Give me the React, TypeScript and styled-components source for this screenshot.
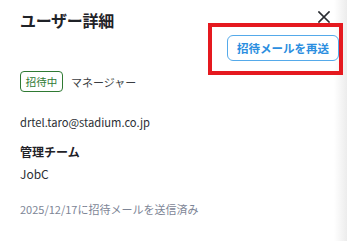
import React from 'react'
import styled, { createGlobalStyle } from 'styled-components'

const GlobalStyle = createGlobalStyle`
  html, body {
    margin: 0;
    padding: 0;
    background: #ffffff;
  }
  body {
    font-family: 'Noto Sans CJK JP', 'Noto Sans', sans-serif;
    color: #25282d;
  }
`

const Drawer = styled.div`
  position: relative;
  width: 347px;
  height: 241px;
  box-sizing: border-box;
  padding: 8px 8px 0 20px;
  background: linear-gradient(to right, #ffffff 0, #ffffff 334px, #ececec 347px);
  overflow: hidden;
`

const HeaderRow = styled.div`
  display: flex;
  justify-content: space-between;
  align-items: flex-start;
  height: 27px;
`

const Title = styled.h2`
  margin: 0;
  font-size: 16px;
  line-height: 25px;
  font-weight: 700;
  color: #1f2227;
  letter-spacing: -0.3px;
`

const CloseButton = styled.button`
  display: flex;
  align-items: center;
  justify-content: center;
  width: 16px;
  height: 16px;
  margin: 1px 7px 0 0;
  padding: 0;
  border: none;
  background: none;
  cursor: pointer;
`

const ActionRow = styled.div`
  display: flex;
  justify-content: flex-end;
`

const ResendButton = styled.button`
  height: 26px;
  width: 112px;
  padding: 0;
  border: 1px solid #55aaea;
  border-radius: 6px;
  background: #ffffff;
  color: #2b8ee0;
  font-family: 'Noto Sans CJK JP', sans-serif;
  font-size: 11.5px;
  font-weight: 700;
  cursor: pointer;
`

const Highlight = styled.div`
  position: absolute;
  left: 208px;
  top: 23px;
  width: 135px;
  height: 52px;
  box-sizing: border-box;
  border: 4px solid #e5191f;
  pointer-events: none;
`

const RoleRow = styled.div`
  display: flex;
  align-items: center;
  gap: 8px;
  margin-top: 10px;
`

const StatusBadge = styled.span`
  display: inline-flex;
  align-items: center;
  justify-content: center;
  box-sizing: border-box;
  width: 43px;
  height: 21px;
  border: 1px solid #2f7a33;
  border-radius: 4px;
  color: #2f7a33;
  font-size: 10.5px;
`

const RoleText = styled.span`
  font-size: 11px;
  color: #3a3d42;
`

const Email = styled.div`
  margin-top: 21px;
  font-size: 11.2px;
  line-height: 18px;
  color: #2c2f34;
`

const Field = styled.div`
  margin-top: 12px;
  display: flex;
  flex-direction: column;
  gap: 4px;
`

const FieldLabel = styled.div`
  font-size: 12px;
  line-height: 18px;
  font-weight: 700;
  color: #1f2227;
`

const FieldValue = styled.div`
  font-size: 12px;
  line-height: 18px;
  color: #2c2f34;
`

const SentNote = styled.div`
  margin-top: 17px;
  font-size: 11px;
  line-height: 18px;
  color: #7d8596;
`

export default function App() {
  return (
    <>
      <GlobalStyle />
      <Drawer>
        <HeaderRow>
          <Title>ユーザー詳細</Title>
          <CloseButton aria-label="閉じる">
            <svg width="12" height="12" viewBox="0 0 12 12">
              <path d="M1 1 L11 11 M11 1 L1 11" stroke="#2a2d32" strokeWidth="1.7" strokeLinecap="square" />
            </svg>
          </CloseButton>
        </HeaderRow>
        <ActionRow>
          <ResendButton>招待メールを再送</ResendButton>
        </ActionRow>
        <RoleRow>
          <StatusBadge>招待中</StatusBadge>
          <RoleText>マネージャー</RoleText>
        </RoleRow>
        <Email>drtel.taro@stadium.co.jp</Email>
        <Field>
          <FieldLabel>管理チーム</FieldLabel>
          <FieldValue>JobC</FieldValue>
        </Field>
        <SentNote>2025/12/17に招待メールを送信済み</SentNote>
        <Highlight />
      </Drawer>
    </>
  )
}
